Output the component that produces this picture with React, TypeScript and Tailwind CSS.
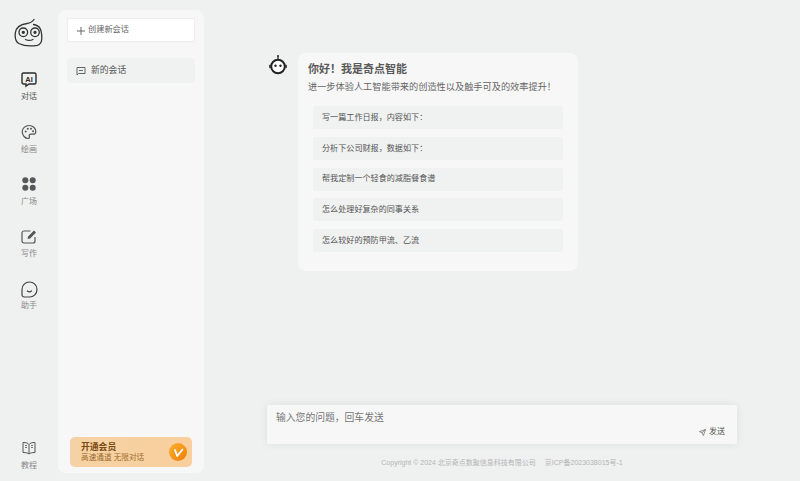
import React from "react";

const font = { fontFamily: '"Liberation Sans","Noto Sans CJK SC",sans-serif' };

function Logo() {
  return (
    <svg width="30" height="30" viewBox="0 0 30 30" fill="none" stroke="#333" strokeWidth="1.300" strokeLinecap="round">
      <path d="M20 1.500c-1.500 2.300-4 3.500-7 4C7 6.300 2 9 1.300 15c-.5 4.500.3 8.500 3.500 10.500 5 2.400 13 2.800 18.500 1.800 3.500-.8 4.500-3 4.500-7 0-4-.3-7.500-1.800-10C24.800 8.300 22.500 7 19.500 6.500" />
      <circle cx="9.300" cy="14.300" r="4.300" />
      <circle cx="21" cy="14.300" r="4.300" />
      <circle cx="9.300" cy="14.300" r="1" fill="#333" />
      <circle cx="21" cy="14.300" r="1" fill="#333" />
      <path d="M11.500 21.500c2.300 1.200 5 1.200 7.500 0" />
    </svg>
  );
}

function AiIcon() {
  return (
    <svg width="16" height="16" viewBox="0 -1 16 16" className="overflow-visible">
      <path d="M2.500 1h11A1.500 1.500 0 0 1 15 2.500v8a1.500 1.500 0 0 1-1.500 1.500H8l-3 2.200V12H2.500A1.500 1.500 0 0 1 1 10.500v-8A1.500 1.500 0 0 1 2.500 1z" fill="none" stroke="#2b2b2b" strokeWidth="1.400" />
      <text x="8" y="9.600" textAnchor="middle" fontSize="7.500" fontWeight="700" fill="#2b2b2b" fontFamily="Liberation Sans">AI</text>
    </svg>
  );
}

function Palette() {
  return (
    <svg width="16" height="16" viewBox="0 0 16 16" fill="none" stroke="#555" strokeWidth="1.200">
      <path d="M8 1.500c-3.800 0-6.800 2.800-6.800 6.300 0 3.600 3 6.700 5.800 6.700 1.300 0 1.700-1 1.300-2-.5-1.300.2-2.300 1.500-2.300h2.400c1.500 0 2.600-1 2.600-2.500C14.800 4.200 11.800 1.500 8 1.500z" />
      <circle cx="4.700" cy="7.500" r="1" fill="#555" stroke="none" />
      <circle cx="6.800" cy="4.700" r="1" fill="#555" stroke="none" />
      <circle cx="10" cy="4.700" r="1" fill="#555" stroke="none" />
      <circle cx="12" cy="7.200" r="1" fill="#555" stroke="none" />
    </svg>
  );
}

function Dots() {
  return (
    <svg width="14" height="14" viewBox="0 0 14 14" fill="#55585b">
      <circle cx="3.300" cy="3.300" r="3" />
      <circle cx="10.700" cy="3.300" r="3" />
      <circle cx="3.300" cy="10.700" r="3" />
      <circle cx="10.700" cy="10.700" r="3" />
    </svg>
  );
}

function Write() {
  return (
    <svg width="16" height="16" viewBox="0 0 16 16" fill="none" stroke="#555" strokeWidth="1.200" className="overflow-visible">
      <path d="M14 9v4a2 2 0 0 1-2 2H3a2 2 0 0 1-2-2V5a2 2 0 0 1 2-2h6.500" />
      <path d="M6.500 11l.6-2.600L13 2.500l2 2-5.900 5.900z" fill="#555" stroke="none" />
    </svg>
  );
}

function Helper() {
  return (
    <svg width="17" height="17" viewBox="0 -1 17 17" fill="none" stroke="#444" strokeWidth="1.200" strokeLinecap="round" className="overflow-visible">
      <path d="M8.500 1a7.500 7.500 0 1 1 0 15H3.200c-1.300 0-2.200-1-2.200-2.200V8.500A7.500 7.500 0 0 1 8.500 1z" />
      <path d="M6.300 10c1.300 1 3 1 4.300 0" />
    </svg>
  );
}

function Book() {
  return (
    <svg width="14" height="14" viewBox="0 0 14 14" fill="none" stroke="#555" strokeWidth="1">
      <path d="M7 3.500C6 2 4 1.500 1 1.500v10c3 0 5 .5 6 1.500 1-1 3-1.500 6-1.500v-10c-3 0-5 .5-6 2zM7 3.500V13" />
      <path d="M3 4.500h2M3 6.500h2M9 4.500h2M9 6.500h2" strokeWidth=".8" />
    </svg>
  );
}

function Robot() {
  return (
    <svg width="20" height="20" viewBox="0 0 20 20">
      <circle cx="10" cy="1" r="1" fill="#222" />
      <path d="M10 1.500v2.500" stroke="#222" strokeWidth="1.200" />
      <circle cx="10" cy="11.500" r="6.800" fill="#fff" stroke="#222" strokeWidth="2" />
      <rect x="1.200" y="9.800" width="1.400" height="3.400" rx=".7" fill="#222" />
      <rect x="17.400" y="9.800" width="1.400" height="3.400" rx=".7" fill="#222" />
      <circle cx="7.500" cy="10.800" r="1.200" fill="#222" />
      <circle cx="12.500" cy="10.800" r="1.200" fill="#222" />
    </svg>
  );
}

function NavItem({ icon, label, active, cls }: { icon: React.ReactNode; label: string; active?: boolean; cls: string }) {
  return (
    <div className={`flex flex-col items-center ${cls}`}>
      <div className="h-[18px] flex items-center justify-center">{icon}</div>
      <span className={`text-[8px] leading-[12px] mt-[3px] ${active ? "text-[#555]" : "text-[#888]"}`}>{label}</span>
    </div>
  );
}

const prompts = [
  "写一篇工作日报，内容如下：",
  "分析下公司财报，数据如下：",
  "帮我定制一个轻食的减脂餐食谱",
  "怎么处理好复杂的同事关系",
  "怎么较好的预防甲流、乙流",
];

export default function App() {
  return (
    <div style={font} className="w-[800px] h-[481px] overflow-hidden flex bg-[#eff0f0]">
      <aside className="w-[58px] h-full flex flex-col items-center pt-[18px] pb-[9px] shrink-0">
        <Logo />
        <NavItem cls="mt-[22px]" icon={<AiIcon />} label="对话" active />
        <NavItem cls="mt-[19.500px]" icon={<Palette />} label="绘画" />
        <NavItem cls="mt-[19.250px]" icon={<Dots />} label="广场" />
        <NavItem cls="mt-[19.250px]" icon={<Write />} label="写作" />
        <NavItem cls="mt-[19.250px]" icon={<Helper />} label="助手" />
        <div className="flex-1" />
        <NavItem cls="" icon={<Book />} label="教程" />
      </aside>

      <nav className="w-[146px] h-[463px] mt-[10px] bg-[#f7f7f7] rounded-[8px] px-[9px] pt-[8px] pb-[6px] flex flex-col shrink-0">
        <button className="h-[24px] bg-white border border-[#ececec] rounded-[2px] flex items-center pl-[9px] pt-[1px] text-[8.200px] text-[#666]">
          <svg width="8" height="8" viewBox="0 0 8 8" stroke="#666" strokeWidth="1" className="mr-[3px]">
            <path d="M4 0v8M0 4h8" />
          </svg>
          创建新会话
        </button>
        <div className="mt-[16px] h-[25px] bg-[#f0f1f1] rounded-[4px] flex items-center pl-[9px] text-[8.800px] text-[#555]">
          <svg width="10" height="10" viewBox="0 0 10 10" fill="none" stroke="#555" strokeWidth=".9" className="mr-[5px]">
            <path d="M1 1.500h8v6H2.500L1 9zM3 4.500h4" />
          </svg>
          新的会话
        </div>
        <div className="flex-1" />
        <div className="mx-[3px] h-[30px] rounded-[5px] bg-gradient-to-r from-[#f5d2a5] to-[#f9cf9d] flex items-center pl-[11px] pr-[5px]">
          <div className="flex-1">
            <div className="text-[8.800px] leading-[11px] font-bold text-[#7a4a10]">开通会员</div>
            <div className="text-[7.650px] leading-[10px] text-[#a06a2c]">高速通道 无限对话</div>
          </div>
          <div className="w-[18px] h-[18px] rounded-full bg-gradient-to-br from-[#fbb02a] to-[#f07c05] flex items-center justify-center">
            <svg width="11" height="11" viewBox="0 0 11 11" fill="none" stroke="#fff" strokeWidth="1.800" strokeLinecap="round" strokeLinejoin="round">
              <path d="M2 3l2.200 6L9.500 2.500" />
            </svg>
          </div>
        </div>
      </nav>

      <main className="flex-1 flex flex-col h-full pl-[63px] pr-[63px]">
        <div className="flex-1 flex items-start pt-[53px] pl-[1px]">
          <div className="mt-[2px] w-[30px] shrink-0"><Robot /></div>
          <div className="w-[280px] h-[218px] bg-[#f7f7f7] rounded-[8px] pt-[9px] px-[10px]">
            <div className="text-[11px] leading-[14px] font-bold text-[#5a5a5a]">你好！我是奇点智能</div>
            <div className="text-[9.200px] leading-[14px] mt-[4px] text-[#666] whitespace-nowrap">进一步体验人工智能带来的创造性以及触手可及的效率提升！</div>
            <div className="mt-[12px] ml-[5px] w-[250px] flex flex-col gap-[7.750px]">
              {prompts.map((p) => (
                <div key={p} className="h-[23px] bg-[#f0f1f1] rounded-[2px] flex items-center pl-[9px] pt-[1px] text-[8.100px] text-[#555]">{p}</div>
              ))}
            </div>
          </div>
        </div>
        <div className="w-[470px] h-[39px] bg-[#f7f7f7] rounded-[2px] shadow-[0_0_8px_rgba(0,0,0,0.08)] px-[9px] pt-[6px] relative">
          <div className="text-[9.800px] leading-[14px] text-[#777]">输入您的问题，回车发送</div>
          <div className="absolute right-[12px] bottom-[6px] flex items-center text-[8px] text-[#555]">
            <svg width="7" height="7" viewBox="0 0 8 8" fill="none" stroke="#666" strokeWidth=".8" className="mr-[3px]">
              <path d="M7.500.500L.500 3l3 1.200L5 7.500zM3.500 4.200L7.500.500" />
            </svg>
            发送
          </div>
        </div>
        <div className="h-[37px] w-[470px] flex items-center justify-center gap-[9px] pt-[1px] text-[7px] text-[#b5b5b5]">
          <span>Copyright © 2024 北京奇点数聚信息科技有限公司</span>
          <span>京ICP备2023038015号-1</span>
        </div>
      </main>
    </div>
  );
}
